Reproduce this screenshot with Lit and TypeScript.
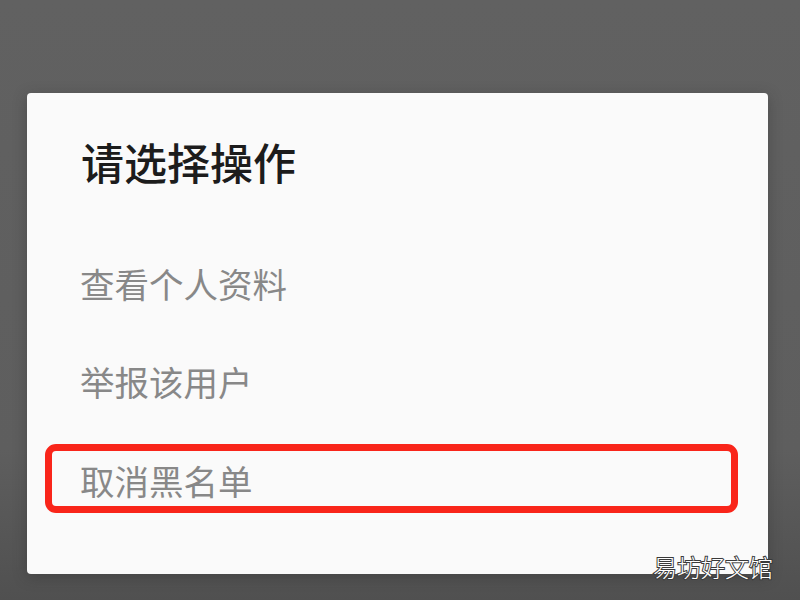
import { LitElement, html, css } from "lit";
import { customElement } from "lit/decorators.js";

const FONT = css`"Noto Sans CJK SC", "Noto Sans", sans-serif`;

@customElement("app-root")
export class AppRoot extends LitElement {
  static styles = css`
    :host {
      display: block;
      width: 800px;
      height: 600px;
      overflow: hidden;
      font-family: ${FONT};
    }
    .page {
      position: relative;
      box-sizing: border-box;
      width: 800px;
      height: 600px;
      padding: 93px 32px 26px 27px;
      background: linear-gradient(#616161 0%, #5e5e5e 75%, #505050 100%);
    }
    .card {
      box-sizing: border-box;
      height: 481px;
      padding: 38px 30px 0 18px;
      background: #fafafa;
      border-radius: 4px;
      display: flex;
      flex-direction: column;
      box-shadow: 0 3px 14px rgba(40, 40, 40, 0.35);
    }
    .title {
      margin: 0 0 0 36px;
      height: 60px;
      line-height: 60px;
      font-size: 43px;
      font-weight: 500;
      color: #1c1c1c;
      white-space: nowrap;
    }
    .items {
      display: flex;
      flex-direction: column;
      margin-top: 67px;
      gap: 48px;
    }
    .item {
      height: 50px;
      line-height: 50px;
      margin-left: 35px;
      font-size: 34.5px;
      color: #888888;
      white-space: nowrap;
    }
    .marked {
      box-sizing: border-box;
      height: 69px;
      margin: -10px 0 0 0;
      padding-left: 28px;
      line-height: 59px;
      border: 7px solid #f9251a;
      border-radius: 11px;
    }
    .watermark {
      position: absolute;
      left: 653px;
      top: 550px;
      font-size: 24px;
      line-height: 34px;
      font-weight: 300;
      color: #fff;
      white-space: nowrap;
      -webkit-text-stroke: 2px #3a3a3a;
      paint-order: stroke fill;
    }
  `;

  render() {
    return html`
      <div class="page">
        <div class="card">
          <h1 class="title">请选择操作</h1>
          <div class="items">
            <div class="item">查看个人资料</div>
            <div class="item">举报该用户</div>
            <div class="item marked">取消黑名单</div>
          </div>
        </div>
        <div class="watermark">易坊好文馆</div>
      </div>
    `;
  }
}
